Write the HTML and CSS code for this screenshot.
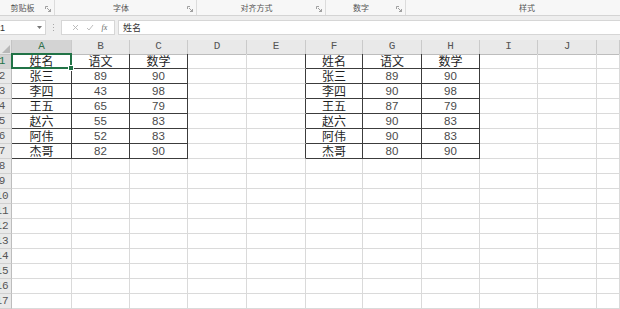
FILE: index.html
```html
<!DOCTYPE html>
<html lang="zh-CN">
<head>
    <meta charset="UTF-8">
    <title>成绩表</title>
    <link rel="stylesheet" href="styles.css">
</head>
<body>
    <!-- 功能区底部的分组标签 -->
    <div class="ribbon">
        <div class="group g1"><span>剪贴板</span><i class="launcher"><svg width="6" height="6" viewBox="0 0 6 6"><path d="M0.5 3V0.5H3M2 2L5.5 5.5M5.5 3V5.5H3" fill="none" stroke="#8a8a8a" stroke-width="0.8"/></svg></i></div>
        <div class="group g2"><span>字体</span><i class="launcher"><svg width="6" height="6" viewBox="0 0 6 6"><path d="M0.5 3V0.5H3M2 2L5.5 5.5M5.5 3V5.5H3" fill="none" stroke="#8a8a8a" stroke-width="0.8"/></svg></i></div>
        <div class="group g3"><span>对齐方式</span><i class="launcher"><svg width="6" height="6" viewBox="0 0 6 6"><path d="M0.5 3V0.5H3M2 2L5.5 5.5M5.5 3V5.5H3" fill="none" stroke="#8a8a8a" stroke-width="0.8"/></svg></i></div>
        <div class="group g4"><span>数字</span><i class="launcher"><svg width="6" height="6" viewBox="0 0 6 6"><path d="M0.5 3V0.5H3M2 2L5.5 5.5M5.5 3V5.5H3" fill="none" stroke="#8a8a8a" stroke-width="0.8"/></svg></i></div>
        <div class="group g5"><span>样式</span></div>
    </div>

    <!-- 编辑栏 -->
    <div class="formula">
        <div class="namebox"><span>A1</span><svg width="5" height="3" viewBox="0 0 5 3"><path d="M0 0H5L2.5 3Z" fill="#777"/></svg></div>
        <div class="dots"><b></b><b></b><b></b></div>
        <div class="fx-box">
            <svg width="7" height="7" viewBox="0 0 7 7"><path d="M1 1L6 6M6 1L1 6" stroke="#b5b5b5" stroke-width="0.9"/></svg>
            <svg width="8" height="7" viewBox="0 0 8 7"><path d="M1 4L3 6L7 1" fill="none" stroke="#b5b5b5" stroke-width="0.9"/></svg>
            <span class="fx">fx</span>
        </div>
        <div class="input">姓名</div>
    </div>

    <!-- 工作表 -->
    <div class="sheet">
        <div class="row head">
            <div class="corner"><i></i></div>
            <div class="ch sel">A</div><div class="ch">B</div><div class="ch">C</div><div class="ch">D</div><div class="ch">E</div><div class="ch">F</div><div class="ch">G</div><div class="ch">H</div><div class="ch">I</div><div class="ch">J</div><div class="ch"></div>
        </div>
        <div class="row">
            <div class="rh sel"><span>1</span></div>
            <div class="c t cur">姓名</div><div class="c t">语文</div><div class="c t">数学</div><div class="c"></div><div class="c tl"></div><div class="c t">姓名</div><div class="c t">语文</div><div class="c t">数学</div><div class="c"></div><div class="c"></div><div class="c"></div>
        </div>
        <div class="row">
            <div class="rh"><span>2</span></div>
            <div class="c t">张三</div><div class="c t n">89</div><div class="c t n">90</div><div class="c"></div><div class="c tl"></div><div class="c t">张三</div><div class="c t n">89</div><div class="c t n">90</div><div class="c"></div><div class="c"></div><div class="c"></div>
        </div>
        <div class="row">
            <div class="rh"><span>3</span></div>
            <div class="c t">李四</div><div class="c t n">43</div><div class="c t n">98</div><div class="c"></div><div class="c tl"></div><div class="c t">李四</div><div class="c t n">90</div><div class="c t n">98</div><div class="c"></div><div class="c"></div><div class="c"></div>
        </div>
        <div class="row">
            <div class="rh"><span>4</span></div>
            <div class="c t">王五</div><div class="c t n">65</div><div class="c t n">79</div><div class="c"></div><div class="c tl"></div><div class="c t">王五</div><div class="c t n">87</div><div class="c t n">79</div><div class="c"></div><div class="c"></div><div class="c"></div>
        </div>
        <div class="row">
            <div class="rh"><span>5</span></div>
            <div class="c t">赵六</div><div class="c t n">55</div><div class="c t n">83</div><div class="c"></div><div class="c tl"></div><div class="c t">赵六</div><div class="c t n">90</div><div class="c t n">83</div><div class="c"></div><div class="c"></div><div class="c"></div>
        </div>
        <div class="row">
            <div class="rh"><span>6</span></div>
            <div class="c t">阿伟</div><div class="c t n">52</div><div class="c t n">83</div><div class="c"></div><div class="c tl"></div><div class="c t">阿伟</div><div class="c t n">90</div><div class="c t n">83</div><div class="c"></div><div class="c"></div><div class="c"></div>
        </div>
        <div class="row">
            <div class="rh"><span>7</span></div>
            <div class="c t">杰哥</div><div class="c t n">82</div><div class="c t n">90</div><div class="c"></div><div class="c tl"></div><div class="c t">杰哥</div><div class="c t n">80</div><div class="c t n">90</div><div class="c"></div><div class="c"></div><div class="c"></div>
        </div>
        <div class="row">
            <div class="rh"><span>8</span></div>
            <div class="c"></div><div class="c"></div><div class="c"></div><div class="c"></div><div class="c"></div><div class="c"></div><div class="c"></div><div class="c"></div><div class="c"></div><div class="c"></div><div class="c"></div>
        </div>
        <div class="row">
            <div class="rh"><span>9</span></div>
            <div class="c"></div><div class="c"></div><div class="c"></div><div class="c"></div><div class="c"></div><div class="c"></div><div class="c"></div><div class="c"></div><div class="c"></div><div class="c"></div><div class="c"></div>
        </div>
        <div class="row">
            <div class="rh"><span>10</span></div>
            <div class="c"></div><div class="c"></div><div class="c"></div><div class="c"></div><div class="c"></div><div class="c"></div><div class="c"></div><div class="c"></div><div class="c"></div><div class="c"></div><div class="c"></div>
        </div>
        <div class="row">
            <div class="rh"><span>11</span></div>
            <div class="c"></div><div class="c"></div><div class="c"></div><div class="c"></div><div class="c"></div><div class="c"></div><div class="c"></div><div class="c"></div><div class="c"></div><div class="c"></div><div class="c"></div>
        </div>
        <div class="row">
            <div class="rh"><span>12</span></div>
            <div class="c"></div><div class="c"></div><div class="c"></div><div class="c"></div><div class="c"></div><div class="c"></div><div class="c"></div><div class="c"></div><div class="c"></div><div class="c"></div><div class="c"></div>
        </div>
        <div class="row">
            <div class="rh"><span>13</span></div>
            <div class="c"></div><div class="c"></div><div class="c"></div><div class="c"></div><div class="c"></div><div class="c"></div><div class="c"></div><div class="c"></div><div class="c"></div><div class="c"></div><div class="c"></div>
        </div>
        <div class="row">
            <div class="rh"><span>14</span></div>
            <div class="c"></div><div class="c"></div><div class="c"></div><div class="c"></div><div class="c"></div><div class="c"></div><div class="c"></div><div class="c"></div><div class="c"></div><div class="c"></div><div class="c"></div>
        </div>
        <div class="row">
            <div class="rh"><span>15</span></div>
            <div class="c"></div><div class="c"></div><div class="c"></div><div class="c"></div><div class="c"></div><div class="c"></div><div class="c"></div><div class="c"></div><div class="c"></div><div class="c"></div><div class="c"></div>
        </div>
        <div class="row">
            <div class="rh"><span>16</span></div>
            <div class="c"></div><div class="c"></div><div class="c"></div><div class="c"></div><div class="c"></div><div class="c"></div><div class="c"></div><div class="c"></div><div class="c"></div><div class="c"></div><div class="c"></div>
        </div>
        <div class="row">
            <div class="rh"><span>17</span></div>
            <div class="c"></div><div class="c"></div><div class="c"></div><div class="c"></div><div class="c"></div><div class="c"></div><div class="c"></div><div class="c"></div><div class="c"></div><div class="c"></div><div class="c"></div>
        </div>
    </div>
</body>
</html>
```

FILE: styles.css
```css
* {
    box-sizing: border-box;
    margin: 0;
    padding: 0;
}

body {
    width: 620px;
    height: 309px;
    overflow: hidden;
    background: #ffffff;
    font-family: "Noto Sans CJK SC", sans-serif;
}

/* 功能区 */
.ribbon {
    display: flex;
    height: 16px;
    background: #f7f7f7;
    border-bottom: 1px solid #d4d4d4;
}

.group {
    flex: none;
    display: flex;
    align-items: center;
    border-right: 1px solid #dcdcdc;
}

.group span {
    flex: 1;
    text-align: center;
    font-size: 8px;
    line-height: 1;
    color: #555;
}

.launcher {
    width: 9px;
    display: flex;
    align-items: center;
    padding-top: 3px;
}

.g1 { width: 55px; }
.g2 { width: 142px; }
.g3 { width: 129px; }
.g4 { width: 80px; }
.g5 { width: 242px; border-right: none; }

/* 编辑栏 */
.formula {
    display: flex;
    height: 24px;
    padding: 4px 0 5px;
    background: #eeeeee;
}

.namebox {
    width: 46px;
    display: flex;
    align-items: center;
    justify-content: space-between;
    padding-right: 3px;
    background: #fff;
    border: 1px solid #d6d6d6;
    border-left: none;
    overflow: hidden;
}

.namebox span {
    margin-left: -6px;
    font-family: "Liberation Sans", sans-serif;
    font-size: 9px;
    color: #333;
}

.dots {
    width: 15px;
    display: flex;
    flex-direction: column;
    align-items: center;
    justify-content: center;
    gap: 2px;
}

.dots b {
    width: 1px;
    height: 1px;
    background: #a8a8a8;
}

.fx-box {
    width: 54px;
    display: flex;
    align-items: center;
    justify-content: space-around;
    padding: 0 3px 0 6px;
    background: #fff;
    border: 1px solid #d6d6d6;
}

.fx {
    font-family: "Liberation Serif", serif;
    font-style: italic;
    font-size: 8px;
    color: #666;
}

.input {
    flex: 1;
    margin-left: 3px;
    padding-left: 4px;
    background: #fff;
    border: 1px solid #d6d6d6;
    border-right: none;
    font-size: 9px;
    line-height: 13px;
    color: #333;
}

/* 工作表 */
.row {
    display: grid;
    grid-template-columns: 12px 60px 58px 58px 59px 59px 57px 59px 58px 58px 59px 1fr;
    height: 15px;
}

.row.head {
    height: 14px;
}

.corner {
    position: relative;
    background: #e6e6e6;
    border-right: 1px solid #c4c4c4;
    border-bottom: 1px solid #c4c4c4;
}

.corner i {
    position: absolute;
    right: 1px;
    bottom: 1px;
    width: 0;
    height: 0;
    border-left: 8px solid transparent;
    border-bottom: 8px solid #b8b8b8;
}

.ch {
    background: #e9e9e9;
    border-right: 1px solid #cacaca;
    border-bottom: 1px solid #bdbdbd;
    text-align: center;
    font-family: "Liberation Mono", monospace;
    font-size: 11px;
    line-height: 13px;
    color: #555;
}

.ch.sel {
    background: #d3d3d3;
    color: #2f6e48;
    border-bottom: 2px solid #217346;
}

.rh {
    overflow: hidden;
    background: #e9e9e9;
    border-right: 1px solid #bdbdbd;
    border-bottom: 1px solid #d0d0d0;
}

.rh span {
    display: block;
    width: 20px;
    margin-left: -8px;
    text-align: center;
    font-family: "Liberation Mono", monospace;
    font-size: 11px;
    line-height: 14px;
    color: #555;
}

.rh.sel {
    background: #d3d3d3;
    border-right: 1px solid #217346;
}

.rh.sel span {
    color: #217346;
}

.c {
    border-right: 1px solid #dadada;
    border-bottom: 1px solid #dadada;
    text-align: center;
    font-size: 12px;
    line-height: 14px;
    color: #1e1e1e;
}

.c.t {
    border-right-color: #3c3c3c;
    border-bottom-color: #3c3c3c;
}

.c.tl {
    border-right-color: #3c3c3c;
}

.c.n {
    font-family: "Liberation Sans", sans-serif;
    font-size: 11.5px;
    color: #4a4a4a;
}

/* 当前选中的单元格 */
.c.cur {
    position: relative;
}

.c.cur::after {
    content: "";
    position: absolute;
    top: -1px;
    left: -1px;
    right: -1px;
    bottom: -1px;
    border: 2px solid #217346;
}

.c.cur::before {
    content: "";
    position: absolute;
    right: -3px;
    bottom: -3px;
    width: 4px;
    height: 4px;
    background: #217346;
    border: 1px solid #fff;
    z-index: 1;
}
```
